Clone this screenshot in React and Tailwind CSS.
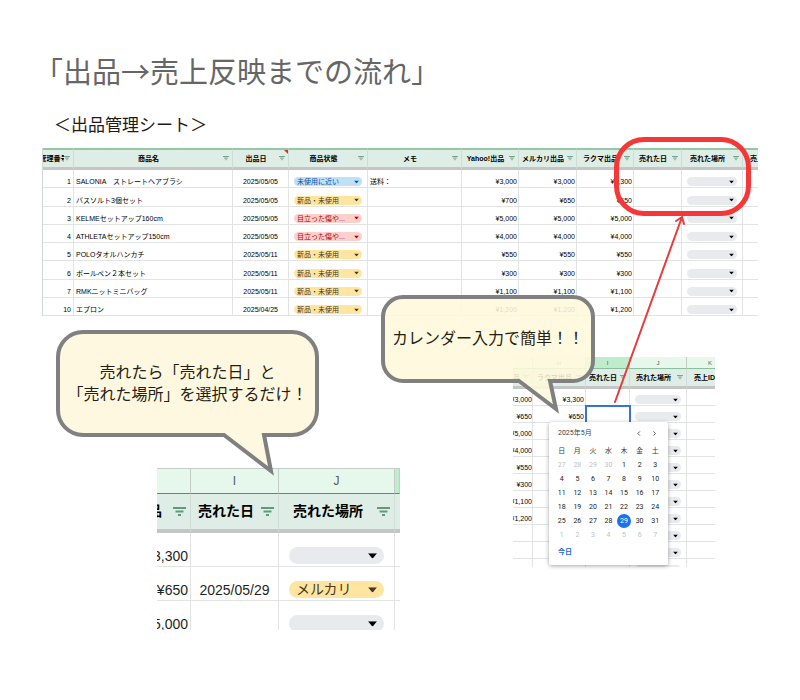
import React, { useState } from "react";
import clsx from "clsx";

const products = [
    { id: 1, name: "SALONIA　ストレートヘアブラシ", date: "2025/05/05", state: "未使用に近い", memo: "送料：", yahoo: "¥3,000", mercari: "¥3,000", rakuma: "¥3,300" },
    { id: 2, name: "バスソルト3個セット", date: "2025/05/05", state: "新品・未使用", memo: "", yahoo: "¥700", mercari: "¥650", rakuma: "¥650" },
    { id: 3, name: "KELMEセットアップ160cm", date: "2025/05/05", state: "目立った傷や...", memo: "", yahoo: "¥5,000", mercari: "¥5,000", rakuma: "¥5,000" },
    { id: 4, name: "ATHLETAセットアップ150cm", date: "2025/05/05", state: "目立った傷や...", memo: "", yahoo: "¥4,000", mercari: "¥4,000", rakuma: "¥4,000" },
    { id: 5, name: "POLOタオルハンカチ", date: "2025/05/11", state: "新品・未使用", memo: "", yahoo: "¥550", mercari: "¥550", rakuma: "¥550" },
    { id: 6, name: "ボールペン２本セット", date: "2025/05/11", state: "新品・未使用", memo: "", yahoo: "¥300", mercari: "¥300", rakuma: "¥300" },
    { id: 7, name: "RMKニットミニバッグ", date: "2025/05/11", state: "新品・未使用", memo: "", yahoo: "¥1,100", mercari: "¥1,100", rakuma: "¥1,100" },
    { id: 10, name: "エプロン", date: "2025/04/25", state: "新品・未使用", memo: "", yahoo: "¥1,200", mercari: "¥1,200", rakuma: "¥1,200" },
];

const stateColors = {
    "未使用に近い": "bg-[#bfe1f6] text-[#0a53a8]",
    "新品・未使用": "bg-[#ffe5a0] text-[#473821]",
    "目立った傷や...": "bg-[#ffcfc9] text-[#b10202]",
};

const calendarRows = [
    ["¥3,000", "¥3,300"],
    ["¥650", "¥650"],
    ["¥5,000", ""],
    ["¥4,000", ""],
    ["¥550", ""],
    ["¥300", ""],
    ["¥1,100", ""],
    ["¥1,200", ""],
    ["", ""],
    ["", ""],
    ["¥1,000", "¥1,000"],
];

const weekDays = ["日", "月", "火", "水", "木", "金", "土"];

const weeks = [
    [27, 28, 29, 30, 1, 2, 3],
    [4, 5, 6, 7, 8, 9, 10],
    [11, 12, 13, 14, 15, 16, 17],
    [18, 19, 20, 21, 22, 23, 24],
    [25, 26, 27, 28, 29, 30, 31],
    [1, 2, 3, 4, 5, 6, 7],
];

const FilterButton = ({ label, large }) => (
    <button type="button" aria-label={`${label}のフィルタ`} className={clsx("shrink-0", large ? "mr-1 w-[13px]" : "mr-[3px] w-[6px]")}>
        <svg viewBox="0 0 13 9" className="block w-full" fill="none" stroke="#5f9a79" strokeWidth="1.9">
            <path d="M0 1h13M2.5 4.5h8M5 8h3" />
        </svg>
    </button>
);

const HeadCell = ({ label, filter = true, large, labelClass = "justify-center", className, children }) => (
    <th className={clsx("border-r border-[#cfddd5] p-0 font-bold", large ? "border-b-4 border-b-[#c4c6c5]" : "border-b-[3px] border-b-[#c4c6c5]", className)}>
        <div className="flex items-center">
            <span className={clsx("flex min-w-0 flex-1 overflow-hidden whitespace-nowrap", labelClass)}>{label}</span>
            {filter && <FilterButton label={label} large={large} />}
        </div>
        {children}
    </th>
);

const Cell = ({ className, children }) => (
    <td className={clsx("border-r border-b border-[#e2e3e3] p-0 align-bottom", className)}>{children}</td>
);

const PillSelect = ({ label, value = "", options = [], large, color = "bg-[#e8eaed] text-black" }) => {
    const [selected, setSelected] = useState(value);

    return (
        <div className={clsx("relative", large ? "mx-[10px] mb-[2px]" : "mx-[5px] mb-px")}>
            <select
                aria-label={label}
                value={selected}
                onChange={(e) => setSelected(e.target.value)}
                className={clsx("block w-full appearance-none rounded-full", color, large ? "h-[17px] pl-[7px] text-[14px] leading-[17px]" : "h-[9px] pl-[3px] text-[7px] leading-[9px]")}
            >
                <option value=""></option>
                {options.map((option) => <option key={option} value={option}>{option}</option>)}
            </select>
            <svg
                viewBox="0 0 8 5"
                className={clsx("pointer-events-none absolute top-1/2 -translate-y-1/2", large ? "right-[7px] w-[9px]" : "right-[3px] w-[5px]", color.split(" ")[1])}
                fill="currentColor"
            >
                <path d="M0 0h8L4 5z" />
            </svg>
        </div>
    );
};

const shops = ["メルカリ", "ラクマ", "Yahoo!"];

const ProductSheet = () => (
    <table className="h-[168px] w-full table-fixed border-separate border-spacing-0 border-l border-[#cfd8d4] text-[7px] leading-[9px] text-black">
        <colgroup>
            <col className="w-[31px]" />
            <col className="w-[159px]" />
            <col className="w-[56px]" />
            <col className="w-[79px]" />
            <col className="w-[94px]" />
            <col className="w-[57px]" />
            <col className="w-[58px]" />
            <col className="w-[57px]" />
            <col className="w-[48px]" />
            <col className="w-[61px]" />
            <col className="w-[15px]" />
        </colgroup>
        <thead>
            <tr className="h-[22px] bg-[#deede5] text-black [&>th]:border-t-2 [&>th]:border-t-[#93c9a5]">
                <HeadCell label="管理番号" />
                <HeadCell label="商品名" />
                <HeadCell label="出品日" className="relative">
                    <span className="absolute top-0 right-0 border-t-4 border-l-4 border-t-[#c5392b] border-l-transparent"></span>
                </HeadCell>
                <HeadCell label="商品状態" />
                <HeadCell label="メモ" />
                <HeadCell label="Yahoo!出品" />
                <HeadCell label="メルカリ出品" />
                <HeadCell label="ラクマ出品" />
                <HeadCell label="売れた日" />
                <HeadCell label="売れた場所" />
                <HeadCell label="売上ID" filter={false} labelClass="pl-[7px]" className="border-r-0" />
            </tr>
        </thead>
        <tbody>
            {products.map((product) => (
                <tr key={product.id} className="h-[18px]">
                    <Cell className="pr-[2px] pb-px text-right">{product.id}</Cell>
                    <Cell className="pb-px pl-[2px] whitespace-nowrap">{product.name}</Cell>
                    <Cell className="pb-px text-center">{product.date}</Cell>
                    <Cell>
                        <PillSelect label="商品状態" value={product.state} options={Object.keys(stateColors)} color={stateColors[product.state]} />
                    </Cell>
                    <Cell className="pb-px pl-[2px]">{product.memo}</Cell>
                    <Cell className="pr-px pb-px text-right">{product.yahoo}</Cell>
                    <Cell className="pr-px pb-px text-right">{product.mercari}</Cell>
                    <Cell className="pr-px pb-px text-right">{product.rakuma}</Cell>
                    <Cell />
                    <Cell><PillSelect label="売れた場所" options={shops} /></Cell>
                    <Cell className="border-r-0" />
                </tr>
            ))}
        </tbody>
    </table>
);

const SoldSheet = () => {
    const rows = [
        { price: "¥3,300", date: "", shop: "" },
        { price: "¥650", date: "2025/05/29", shop: "メルカリ" },
        { price: "¥5,000", date: "", shop: "" },
    ];

    return (
        <div className="h-[162px] w-[243px] overflow-hidden">
            <table className="w-full table-fixed border-separate border-spacing-0 text-[14px] leading-[17px] text-[#1f1f1f]">
                <colgroup>
                    <col className="w-[34px]" />
                    <col className="w-[88px]" />
                    <col className="w-[116px]" />
                    <col className="w-[5px]" />
                </colgroup>
                <thead>
                    <tr className="h-[26px] bg-[#e6f8ec] text-[12px] text-[#575b5f] [&>th]:border-t [&>th]:border-r [&>th]:border-b [&>th]:border-[#c3cdc7] [&>th]:border-b-[#4f9468] [&>th]:p-0 [&>th]:font-normal">
                        <th></th>
                        <th>I</th>
                        <th>J</th>
                        <th className="bg-[#bfeccb]"></th>
                    </tr>
                    <tr className="h-[39px] bg-[#deede5] text-black">
                        <HeadCell label="品" large labelClass="justify-end pr-[11px]" />
                        <HeadCell label="売れた日" large />
                        <HeadCell label="売れた場所" large />
                        <HeadCell label="" filter={false} large className="border-r-0" />
                    </tr>
                </thead>
                <tbody>
                    {rows.map((row) => (
                        <tr key={row.price} className="h-[34px]">
                            <Cell className="overflow-hidden pr-[2px] pb-px"><div className="flex justify-end">{row.price}</div></Cell>
                            <Cell className="pb-px text-center">{row.date}</Cell>
                            <Cell>
                                <PillSelect label="売れた場所" large value={row.shop} options={shops} color={row.shop ? "bg-[#ffe5a0] text-[#473821]" : undefined} />
                            </Cell>
                            <Cell className="border-r-0" />
                        </tr>
                    ))}
                </tbody>
            </table>
        </div>
    );
};

const Calendar = () => {
    const [selectedDay, setSelectedDay] = useState("4-29");

    return (
        <div className="absolute top-[65px] left-[36px] h-[143px] w-[119px] rounded-xs bg-white px-[5px] pt-[5px] font-[Roboto,'Noto_Sans_CJK_JP',sans-serif] text-[7px] leading-[12px] text-[#3c4043] shadow-[0_1px_4px_rgba(0,0,0,0.35)]">
            <div className="flex items-center pl-1">
                <span className="flex-1">2025年5月</span>
                <button type="button" aria-label="前の月" className="w-[16px]">
                    <svg viewBox="0 0 4 6" className="mx-auto h-[5px]" fill="none" stroke="currentColor"><path d="M3.5 .5 1 3l2.5 2.5" /></svg>
                </button>
                <button type="button" aria-label="次の月" className="w-[16px]">
                    <svg viewBox="0 0 4 6" className="mx-auto h-[5px]" fill="none" stroke="currentColor"><path d="M.5 .5 3 3 .5 5.5" /></svg>
                </button>
            </div>

            <table className="mt-[5px] w-full table-fixed border-separate border-spacing-0 text-center">
                <thead>
                    <tr className="h-[14px]">
                        {weekDays.map((day) => <th key={day} className="p-0 font-normal">{day}</th>)}
                    </tr>
                </thead>
                <tbody>
                    {weeks.map((week, weekIndex) => (
                        <tr key={weekIndex}>
                            {week.map((day) => {
                                const key = `${weekIndex}-${day}`;
                                const otherMonth = (weekIndex === 0 && day > 7) || weekIndex === 5;
                                return (
                                    <td key={key} className="h-[14px] p-0">
                                        <button
                                            type="button"
                                            onClick={() => setSelectedDay(key)}
                                            className={clsx("mx-auto block size-[14px] rounded-full leading-[14px]", selectedDay === key ? "bg-[#1a73e8] text-white" : (otherMonth ? "text-[#bdc1c6]" : "text-[#202124]"))}
                                        >
                                            {day}
                                        </button>
                                    </td>
                                );
                            })}
                        </tr>
                    ))}
                </tbody>
            </table>

            <button type="button" className="mt-[4px] ml-1 block font-bold text-[#1967d2]">今日</button>
        </div>
    );
};

const CalendarSheet = () => (
    <div className="h-[210px] w-[202px] overflow-hidden">
        <table className="w-full table-fixed border-separate border-spacing-0 text-[7px] leading-[8px] text-black">
            <colgroup>
                <col className="w-[20px]" />
                <col className="w-[53px]" />
                <col className="w-[44px]" />
                <col className="w-[57px]" />
                <col className="w-[28px]" />
            </colgroup>
            <thead>
                <tr className="h-[12px] bg-[#e6f8ec] text-[6px] text-[#575b5f] [&>th]:border-r [&>th]:border-b [&>th]:border-[#c3cdc7] [&>th]:border-b-[#8dbf9f] [&>th]:p-0 [&>th]:font-normal">
                    <th></th>
                    <th>H</th>
                    <th className="bg-[#bfeccb]">I</th>
                    <th>J</th>
                    <th className="border-r-0!"><span className="block pl-[18px]">K</span></th>
                </tr>
                <tr className="h-[20px] bg-[#deede5] text-black">
                    <HeadCell label="品" labelClass="justify-start" />
                    <HeadCell label="ラクマ出品" />
                    <HeadCell label="売れた日" />
                    <HeadCell label="売れた場所" />
                    <HeadCell label="売上ID" filter={false} labelClass="pl-[7px]" className="border-r-0" />
                </tr>
            </thead>
            <tbody>
                {calendarRows.map(([mercari, rakuma], index) => (
                    <tr key={index} className="h-[17px]">
                        <Cell className="overflow-hidden pb-px"><div className="flex justify-end">{mercari}</div></Cell>
                        <Cell className="pr-px pb-px text-right">{rakuma}</Cell>
                        <Cell className={index === 1 ? "outline-2 -outline-offset-1 outline-[#3871d8]" : ""} />
                        <Cell><PillSelect label="売れた場所" options={shops} /></Cell>
                        <Cell className="border-r-0" />
                    </tr>
                ))}
            </tbody>
        </table>
    </div>
);

const App = () => {
    return (
        <main className="relative min-h-screen overflow-hidden bg-white px-[42px] pt-[48px] font-['Liberation_Sans','Noto_Sans_CJK_JP',sans-serif]">

            <h1 className="-ml-2 font-['Noto_Sans_CJK_JP',sans-serif] text-[29px] leading-[44px] text-[#666666]">「出品→売上反映までの流れ」</h1>
            <h2 className="mt-5 ml-3 font-['Noto_Sans_CJK_JP',sans-serif] text-[17px] leading-[24px] text-[#231815]">＜出品管理シート＞</h2>

            {/* Product Sheet - Starts Here */}
            <section className="relative mt-3">
                <ProductSheet />
                <div className="pointer-events-none absolute -top-[11px] right-[7px] z-20 h-[79px] w-[137px] rounded-[30px] border-5 border-[#f63737]"></div>
            </section>
            {/* Product Sheet - Ends Here */}

            <div className="flex items-start justify-between">
                {/* Sold Date and Place - Starts Here */}
                <section>
                    <div className="relative mt-[14px] ml-[14px] flex h-[107px] w-[263px] items-center justify-center">
                        <svg width="263" height="146" className="absolute top-0 left-0 z-10" fill="#fff8e0" stroke="#808080" strokeWidth="4">
                            <path d="M27 2H236a25 25 0 0 1 25 25V80a25 25 0 0 1-25 25H208L215 141 168 105H27A25 25 0 0 1 2 80V27A25 25 0 0 1 27 2Z" />
                        </svg>
                        <p className="relative z-10 pb-1 text-center font-['Noto_Sans_CJK_JP',sans-serif] text-[16px] leading-[22px] whitespace-nowrap text-[#231f14]">
                            売れたら「売れた日」と<br />「売れた場所」を選択するだけ！
                        </p>
                    </div>
                    <div className="mt-[31px] ml-[115px]">
                        <SoldSheet />
                    </div>
                </section>
                {/* Sold Date and Place - Ends Here */}

                {/* Calendar Input - Starts Here */}
                <section className="relative mt-[41px] mr-[43px]">
                    <CalendarSheet />
                    <Calendar />

                    <div className="absolute -top-[62px] -left-[132px] z-10 flex h-[88px] w-[214px] items-center justify-center">
                        <svg width="214" height="120" className="absolute top-0 left-0" fill="#fff8dc" fillOpacity="0.88" stroke="#808080" strokeWidth="4">
                            <path d="M22 2H192a20 20 0 0 1 20 20V66a20 20 0 0 1-20 20H169L175 114 138 86H22A20 20 0 0 1 2 66V22A20 20 0 0 1 22 2Z" />
                        </svg>
                        <p className="relative pb-1 font-['Noto_Sans_CJK_JP',sans-serif] text-[16px] leading-[22px] whitespace-nowrap text-[#231f14]">カレンダー入力で簡単！！</p>
                    </div>

                    <svg width="76" height="192" className="pointer-events-none absolute -top-[143px] left-[99px] z-20" fill="none" stroke="#e53c3c" strokeWidth="2" strokeLinecap="round">
                        <path d="M3 188 70 3M64 7l6-4 2 7" />
                    </svg>
                </section>
                {/* Calendar Input - Ends Here */}
            </div>

        </main>
    );
};


export default App;
